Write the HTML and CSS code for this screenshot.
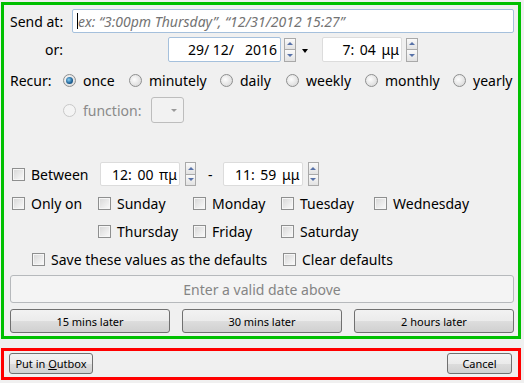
FILE: index.html
```html
<!DOCTYPE html>
<html>
<head>
<meta name="viewport" content="width=device-width, initial-scale=1">
<link rel="stylesheet" href="styles.css">
</head>
<body>

<div class="panel">

  <div class="row send-row">
    <label class="lbl">Send at:</label>
    <div class="field text-field focus"><span class="caret"></span><span class="hint">ex: “3:00pm Thursday”, “12/31/2012 15:27”</span></div>
  </div>

  <div class="row or-row">
    <label class="lbl lbl-right">or:</label>
    <div class="when">
      <div class="field num-field date-field focus">29/ 12/   2016</div>
      <div class="spin"><i class="up"></i><i class="down"></i></div>
      <span class="drop"></span>
      <div class="field num-field time-field">7: 04 μμ</div>
      <div class="spin"><i class="up"></i><i class="down"></i></div>
    </div>
  </div>

  <div class="recur-row">
    <span>Recur:</span>
    <span class="opt"><span class="radio on"></span>once</span>
    <span class="opt"><span class="radio"></span>minutely</span>
    <span class="opt"><span class="radio"></span>daily</span>
    <span class="opt"><span class="radio"></span>weekly</span>
    <span class="opt"><span class="radio"></span>monthly</span>
    <span class="opt"><span class="radio"></span>yearly</span>
  </div>

  <div class="row func-row">
    <span class="opt off"><span class="radio"></span>function:</span>
    <div class="combo"><span class="combo-arrow"></span></div>
  </div>

  <div class="row between-row">
    <span class="opt between"><span class="check"></span>Between</span>
    <div class="field num-field small-time">12: 00 πμ</div>
    <div class="spin spin-b"><i class="up"></i><i class="down"></i></div>
    <span class="dash">-</span>
    <div class="field num-field small-time">11: 59 μμ</div>
    <div class="spin spin-b"><i class="up"></i><i class="down"></i></div>
  </div>

  <div class="days">
    <span class="opt"><span class="check"></span>Only on</span>
    <span class="opt"><span class="check"></span>Sunday</span>
    <span class="opt"><span class="check"></span>Monday</span>
    <span class="opt"><span class="check"></span>Tuesday</span>
    <span class="opt"><span class="check"></span>Wednesday</span>
    <span></span>
    <span class="opt"><span class="check"></span>Thursday</span>
    <span class="opt"><span class="check"></span>Friday</span>
    <span class="opt"><span class="check"></span>Saturday</span>
    <span></span>
  </div>

  <div class="save-row">
    <span class="opt"><span class="check"></span>Save these values as the defaults</span>
    <span class="opt"><span class="check"></span>Clear defaults</span>
  </div>

  <div class="big-btn">Enter a valid date above</div>

  <div class="later">
    <button class="btn">15 mins later</button>
    <button class="btn">30 mins later</button>
    <button class="btn">2 hours later</button>
  </div>

</div>

<div class="footer">
  <button class="btn outbox">Put in <u>O</u>utbox</button>
  <button class="btn cancel">Cancel</button>
</div>

</body>
</html>
```

FILE: styles.css
```css
body {
  margin: 0;
  background: #f0f0f0;
  font-family: "Noto Sans", sans-serif;
  font-size: 14px;
  color: #000;
}

/* Green box: the scheduling form */
.panel {
  margin: 2px 0 0 1px;
  width: 520px;
  height: 337px;
  box-sizing: border-box;
  border: 3px solid #00c000;
  padding: 4px 4px 0 6px;
}

.row {
  display: flex;
  align-items: center;
}

.lbl {
  width: 62px;
  flex: none;
}

.lbl-right {
  width: 53px;
  text-align: right;
}

/* text boxes */
.field {
  box-sizing: border-box;
  background: #fff;
  border: 1px solid #dcdcdc;
  border-radius: 2px;
  display: flex;
  align-items: center;
}

.focus {
  border-color: #a5c0dc;
}

.send-row {
  height: 24px;
}

.text-field {
  flex: 1;
  height: 24px;
  padding-left: 4px;
}

.caret {
  width: 1px;
  height: 16px;
  background: #000;
}

.hint {
  font-style: italic;
  color: #737373;
}

.num-field {
  justify-content: flex-end;
  white-space: pre;
  padding-right: 2px;
}

.or-row {
  height: 25px;
  margin-top: 4px;
}

.when {
  flex: 1;
  display: flex;
  justify-content: center;
  align-items: center;
  margin-left: 9px;
}

.date-field {
  width: 113px;
  height: 25px;
  padding-right: 3px;
}

.time-field {
  width: 80px;
  height: 25px;
  word-spacing: 2px;
}

/* up/down spinner */
.spin {
  width: 12px;
  height: 24px;
  display: flex;
  flex-direction: column;
  margin-left: 3px;
}

.spin i {
  flex: 1;
  border: 1px solid #a9a9a9;
  background: linear-gradient(#fafafa, #e2e2e2);
  display: flex;
  align-items: center;
  justify-content: center;
}

.spin i + i {
  border-top: none;
}

.spin .up::after {
  content: "";
  border: 3px solid transparent;
  border-top: none;
  border-bottom: 3px solid #5872a8;
}

.spin .down::after {
  content: "";
  border: 3px solid transparent;
  border-bottom: none;
  border-top: 3px solid #5872a8;
}

.time-field + .spin {
  margin-left: 4px;
}

.drop {
  border: 3px solid transparent;
  border-bottom: none;
  border-top: 4px solid #000;
  margin: 2px 14px 0 6px;
}

/* radio and check options */
.opt {
  display: flex;
  align-items: center;
  gap: 7px;
  white-space: nowrap;
}

.radio {
  width: 13px;
  height: 13px;
  box-sizing: border-box;
  border: 1px solid #8e8f8f;
  border-radius: 50%;
  background: radial-gradient(circle at 40% 40%, #fdfdfd, #d2d2d2);
  display: flex;
  align-items: center;
  justify-content: center;
  flex: none;
}

.radio.on::after {
  content: "";
  width: 7px;
  height: 7px;
  border-radius: 50%;
  background: radial-gradient(circle at 40% 40%, #8ad0f5, #1b5e92 60%, #103f68);
}

.off {
  color: #8a8a8a;
}

.off .radio {
  border-color: #c8c8c8;
  background: #f4f4f4;
}

.check {
  width: 13px;
  height: 13px;
  box-sizing: border-box;
  border: 1px solid #8e8f8f;
  box-shadow: inset 0 0 0 1px #f6f6f6;
  background: linear-gradient(135deg, #d6d6d6, #fbfbfb);
  flex: none;
}

.recur-row {
  display: grid;
  grid-template-columns: 53px 66px 91px 66px 79px 88px auto;
  align-items: center;
  height: 24px;
  margin-top: 6px;
}

.func-row {
  height: 26px;
  margin-top: 5px;
  padding-left: 53px;
}

.combo {
  width: 33px;
  height: 26px;
  box-sizing: border-box;
  margin-left: 10px;
  border: 1px solid #bdbdbd;
  border-radius: 3px;
  background: #f2f2f2;
  display: flex;
  align-items: center;
  justify-content: flex-end;
  padding-right: 6px;
}

.combo-arrow {
  border: 3px solid transparent;
  border-bottom: none;
  border-top: 3px solid #9a9a9a;
}

.between-row {
  height: 24px;
  margin-top: 39px;
  padding-left: 2px;
}

.between {
  width: 88px;
  gap: 6px;
}

.small-time {
  width: 80px;
  height: 24px;
  word-spacing: 2px;
}

.spin-b {
  width: 11px;
  margin-left: 5px;
}

.dash {
  margin: 0 10px 0 12px;
}

.days {
  display: grid;
  grid-template-columns: 86px 95px 88px 93px auto;
  grid-auto-rows: 24px;
  row-gap: 4px;
  align-items: center;
  margin-top: 5px;
  padding-left: 2px;
}

.days .opt,
.save-row .opt {
  gap: 6px;
}

.save-row {
  display: grid;
  grid-template-columns: 251px auto;
  align-items: center;
  height: 24px;
  margin-top: 4px;
  padding-left: 22px;
}

/* disabled wide button */
.big-btn {
  height: 28px;
  margin-top: 4px;
  box-sizing: border-box;
  border: 1px solid #b6b9bc;
  border-radius: 3px;
  background: #f4f4f4;
  color: #858585;
  display: flex;
  align-items: center;
  justify-content: center;
}

.later {
  display: grid;
  grid-template-columns: repeat(3, 1fr);
  column-gap: 12px;
  margin-top: 6px;
}

.btn {
  height: 24px;
  box-sizing: border-box;
  border: 1px solid #707070;
  border-radius: 3px;
  background: linear-gradient(#f2f2f2 0%, #ebebeb 50%, #dddddd 51%, #d0d0d0 100%);
  font-family: "Noto Sans", sans-serif;
  font-size: 11px;
  color: #000;
  padding: 0;
}

/* Red box: bottom buttons */
.footer {
  margin: 9px 0 0 1px;
  width: 520px;
  height: 32px;
  box-sizing: border-box;
  border: 3px solid #ff0000;
  display: flex;
  justify-content: space-between;
  align-items: flex-start;
  padding: 2px 6px 0 5px;
}

.outbox {
  width: 84px;
  height: 21px;
}

.cancel {
  width: 65px;
  height: 21px;
}
```
